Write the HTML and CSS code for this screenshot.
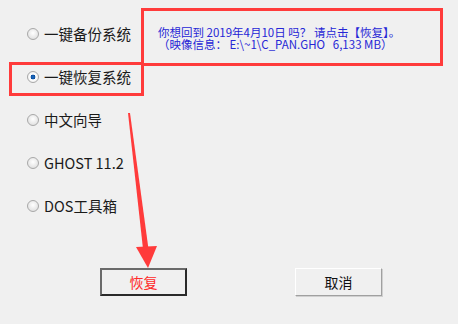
FILE: index.html
```html
<!DOCTYPE html>
<html>
<head>
    <title>一键恢复</title>
    <link rel="stylesheet" href="styles.css">
</head>
<body>

    <div class="dialog">

        <div class="main">
            <div class="options">
                <label class="option"><span class="radio"></span>一键备份系统</label>
                <label class="option"><span class="radio checked"></span>一键恢复系统</label>
                <label class="option"><span class="radio"></span>中文向导</label>
                <label class="option"><span class="radio"></span>GHOST 11.2</label>
                <label class="option"><span class="radio"></span>DOS工具箱</label>
            </div>

            <div class="info">
                <div>你想回到 2019年4月10日 吗？ 请点击【恢复】。</div>
                <div>（映像信息： E:\~1\C_PAN.GHO&nbsp;&nbsp;&nbsp;6,133 MB）</div>
            </div>
        </div>

        <div class="buttons">
            <button class="btn default">恢复</button>
            <button class="btn">取消</button>
        </div>

        <!-- 标注 -->
        <div class="mark markInfo"></div>
        <div class="mark markOption"></div>
        <svg class="arrow" width="458" height="324" viewBox="0 0 458 324">
            <polygon points="128,113 130,113 148.5,249 143,249" fill="#ff3b3b"/>
            <polygon points="136,247 157,246 148,268" fill="#ff3b3b"/>
        </svg>

    </div>

</body>
</html>
```

FILE: styles.css
```css
body {
    margin: 0;
    background-color: #f0f0f0;
    font-family: "Noto Sans CJK SC", "Noto Sans", sans-serif;
}
.dialog {
    position: relative;
    width: 458px;
    height: 324px;
}
.main {
    display: flex;
}
.options {
    display: flex;
    flex-direction: column;
    padding-top: 12px;
    padding-left: 27px;
    width: 131px;
}
.option {
    display: flex;
    align-items: center;
    height: 43px;
    font-size: 14.5px;
    color: #1a1a1a;
}
.radio {
    width: 10px;
    height: 10px;
    border: 1px solid #a8a8a8;
    border-radius: 50%;
    margin-right: 5px;
    background: radial-gradient(circle at 50% 40%, #ffffff 0%, #e4e4e4 70%, #d0d0d0 100%);
    box-sizing: content-box;
    flex-shrink: 0;
}
.radio.checked {
    background: radial-gradient(circle, #1e6fc8 0%, #0c4f9e 30%, #ffffff 38%, #e8e8e8 100%);
}
.info {
    padding-top: 26px;
    font-size: 11.5px;
    line-height: 12px;
    color: #2626d6;
    white-space: nowrap;
}
.buttons {
    display: flex;
    gap: 108px;
    padding-left: 100px;
    margin-top: 41px;
}
.btn {
    width: 87px;
    height: 28px;
    font-family: "Noto Sans CJK SC", sans-serif;
    font-size: 14px;
    color: #111;
    background-color: #f0f0f0;
    border: 1px solid;
    border-color: #ffffff #a0a0a0 #a0a0a0 #ffffff;
    box-shadow: 1px 1px 0 #d0d0d0;
    padding: 0;
}
.btn.default {
    color: #ff2a2a;
    border: 2px solid #3a3a3a;
    border-color: #6a6a6a #2a2a2a #2a2a2a #6a6a6a;
    box-shadow: none;
}
.mark {
    position: absolute;
    border: 3px solid #ff3b3b;
}
.markInfo {
    left: 141px;
    top: 8px;
    width: 296px;
    height: 52px;
}
.markOption {
    left: 9px;
    top: 62px;
    width: 129px;
    height: 28px;
}
.arrow {
    position: absolute;
    left: 0;
    top: 0;
}
```
